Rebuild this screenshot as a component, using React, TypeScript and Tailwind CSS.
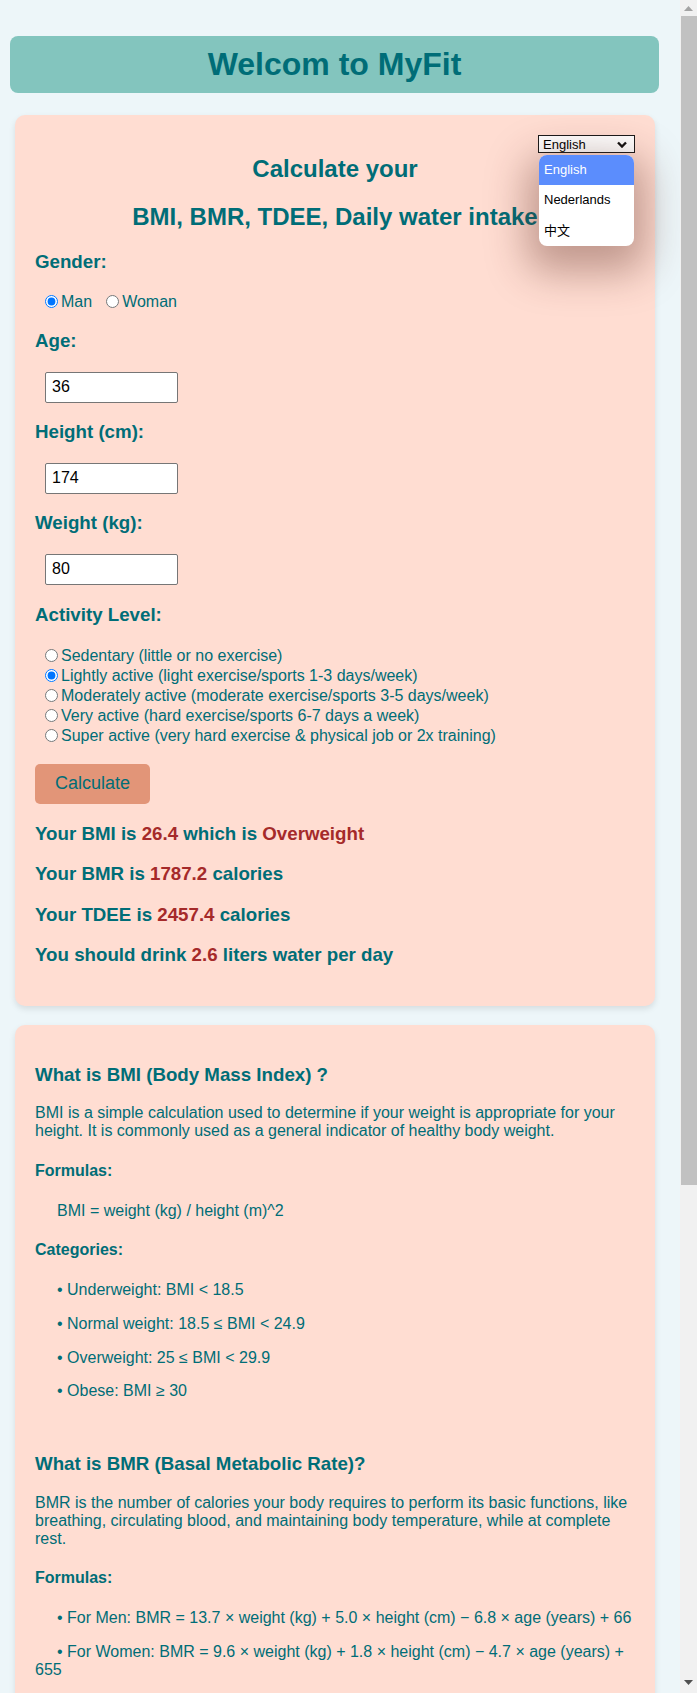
import React from "react";

const activityLevels = [
  { label: "Sedentary (little or no exercise)", checked: false },
  { label: "Lightly active (light exercise/sports 1-3 days/week)", checked: true },
  { label: "Moderately active (moderate exercise/sports 3-5 days/week)", checked: false },
  { label: "Very active (hard exercise/sports 6-7 days a week)", checked: false },
  { label: "Super active (very hard exercise & physical job or 2x training)", checked: false },
];

const bmiCategories = [
  "Underweight: BMI < 18.5",
  "Normal weight: 18.5 ≤ BMI < 24.9",
  "Overweight: 25 ≤ BMI < 29.9",
  "Obese: BMI ≥ 30",
];

const Radio: React.FC<{ name: string; checked?: boolean; className?: string }> = ({
  name,
  checked,
  className,
}) => (
  <input
    type="radio"
    name={name}
    defaultChecked={checked}
    className={"m-0 h-[13px] w-[13px] shrink-0 " + (className ?? "")}
  />
);

const NumberField: React.FC<{ value: string }> = ({ value }) => (
  <input
    type="text"
    defaultValue={value}
    className="mt-[20px] ml-[10px] block h-[31px] w-[133px] rounded-[2px] border border-[#767676] bg-white px-[6px] text-base text-black outline-none"
  />
);

const Label: React.FC<{ children: React.ReactNode; className?: string }> = ({
  children,
  className,
}) => (
  <h3 className={"text-[18.72px] font-bold leading-[21.5px] " + (className ?? "")}>
    {children}
  </h3>
);

const Num: React.FC<{ children: React.ReactNode }> = ({ children }) => (
  <span className="text-[#a52a2a]">{children}</span>
);

const LanguageSelect: React.FC = () => (
  <>
    <div className="absolute top-[20px] right-[20px] flex h-[18px] w-[97px] items-center justify-between border border-[#1a1a1a] bg-white pr-[7px] pl-[4px] text-[13px] leading-none text-black">
      <span>English</span>
      <svg width="10" height="7" viewBox="0 0 10 7">
        <polyline points="1,1.5 5,5.5 9,1.5" fill="none" stroke="#111" strokeWidth="2.4" />
      </svg>
    </div>
    <div className="absolute top-[40px] right-[21px] w-[95px] overflow-hidden rounded-[8px] bg-white text-[13px] text-black shadow-[0_14px_40px_12px_rgba(90,40,30,0.38)]">
      <div className="flex h-[30px] items-center bg-[#5b8dfd] pl-[5px] text-white">English</div>
      <div className="flex h-[30px] items-center pl-[5px]">Nederlands</div>
      <div className="flex h-[31px] items-center pl-[5px] font-['Liberation_Sans','Noto_Sans_CJK_SC',sans-serif]">
        中文
      </div>
    </div>
  </>
);

const Scrollbar: React.FC = () => (
  <div className="flex w-[17px] shrink-0 flex-col bg-[#f1f1f1]">
    <div className="flex h-[16px] items-center justify-center">
      <svg width="9" height="5" viewBox="0 0 9 5">
        <polygon points="0,5 4.5,0 9,5" fill="#a3a3a3" />
      </svg>
    </div>
    <div className="ml-[1px] h-[1169px] bg-[#c1c1c1]" />
    <div className="flex-1" />
    <div className="flex h-[17px] items-start justify-center pt-[4px]">
      <svg width="9" height="5" viewBox="0 0 9 5">
        <polygon points="0,0 9,0 4.5,5" fill="#505050" />
      </svg>
    </div>
  </div>
);

const App: React.FC = () => {
  return (
    <div className="flex h-[1693px] overflow-hidden bg-[#edf6f9] font-['Liberation_Sans',Arial,sans-serif] text-[#006d77]">
      <div className="w-[680px] shrink-0 overflow-hidden pt-[36px]">
        <header className="ml-[10px] flex h-[57px] w-[649px] items-center justify-center rounded-[8px] bg-[#83c5be]">
          <h1 className="text-[32px] leading-[37px] font-bold">Welcom to MyFit</h1>
        </header>

        <section className="relative mt-[22px] ml-[15px] w-[640px] rounded-[10px] bg-[#ffddd2] p-[20px] shadow-[0_3px_6px_rgba(0,0,0,0.1)]">
          <LanguageSelect />

          <h2 className="mt-[20px] text-center text-2xl leading-[28px] font-bold">Calculate your</h2>
          <h2 className="mt-[20px] text-center text-2xl leading-[28px] font-bold">
            BMI, BMR, TDEE, Daily water intake
          </h2>

          <Label className="mt-[20px]">Gender:</Label>
          <div className="mt-[19px] flex h-[20px] items-center text-base">
            <Radio name="gender" checked className="mr-[3px] ml-[10px]" />
            <span>Man</span>
            <Radio name="gender" className="mr-[3px] ml-[14px]" />
            <span>Woman</span>
          </div>

          <Label className="mt-[18.5px]">Age:</Label>
          <NumberField value="36" />
          <Label className="mt-[18.5px]">Height (cm):</Label>
          <NumberField value="174" />
          <Label className="mt-[18.5px]">Weight (kg):</Label>
          <NumberField value="80" />

          <Label className="mt-[19.5px]">Activity Level:</Label>
          <div className="mt-[20px]">
            {activityLevels.map((level) => (
              <div key={level.label} className="flex h-[20px] items-center text-base">
                <Radio name="activity" checked={level.checked} className="mr-[3px] ml-[10px]" />
                <span>{level.label}</span>
              </div>
            ))}
          </div>

          <button className="mt-[18px] block h-[40px] rounded-[5px] bg-[#e29578] px-[20px] text-[18px] text-[#006d77]">
            Calculate
          </button>

          <Label className="mt-[19px]">
            Your BMI is <Num>26.4</Num> which is <Num>Overweight</Num>
          </Label>
          <Label className="mt-[19px]">
            Your BMR is <Num>1787.2</Num> calories
          </Label>
          <Label className="mt-[19px]">
            Your TDEE is <Num>2457.4</Num> calories
          </Label>
          <Label className="mt-[19px] mb-[20px]">
            You should drink <Num>2.6</Num> liters water per day
          </Label>
        </section>

        <section className="mt-[19.5px] ml-[15px] w-[640px] rounded-[10px] bg-[#ffddd2] p-[20px] text-base shadow-[0_3px_6px_rgba(0,0,0,0.1)]">
          <h3 className="my-[18.72px] text-[18.72px] leading-[21.5px] font-bold">
            What is BMI (Body Mass Index) ?
          </h3>
          <p className="my-4 leading-[18.4px]">
            BMI is a simple calculation used to determine if your weight is appropriate for your
            height. It is commonly used as a general indicator of healthy body weight.
          </p>
          <h4 className="my-[21.28px] leading-[18.4px] font-bold">Formulas:</h4>
          <p className="my-4 indent-[22px] leading-[18.4px]">BMI = weight (kg) / height (m)^2</p>
          <h4 className="my-[21.28px] leading-[18.4px] font-bold">Categories:</h4>
          {bmiCategories.map((c) => (
            <p key={c} className="my-4 indent-[22px] leading-[17.8px]">
              • {c}
            </p>
          ))}
          <div className="h-[18.4px]" />

          <h3 className="my-[18.72px] text-[18.72px] leading-[21.5px] font-bold">
            What is BMR (Basal Metabolic Rate)?
          </h3>
          <p className="my-4 leading-[18.2px]">
            BMR is the number of calories your body requires to perform its basic functions, like
            breathing, circulating blood, and maintaining body temperature, while at complete rest.
          </p>
          <h4 className="my-[21px] leading-[18.4px] font-bold">Formulas:</h4>
          <p className="my-4 indent-[22px] leading-[18.4px]">
            • For Men: BMR = 13.7 × weight (kg) + 5.0 × height (cm) − 6.8 × age (years) + 66
          </p>
          <p className="my-4 indent-[22px] leading-[18.4px]">
            • For Women: BMR = 9.6 × weight (kg) + 1.8 × height (cm) − 4.7 × age (years) + 655
          </p>
        </section>
      </div>
      <Scrollbar />
    </div>
  );
};

export default App;
